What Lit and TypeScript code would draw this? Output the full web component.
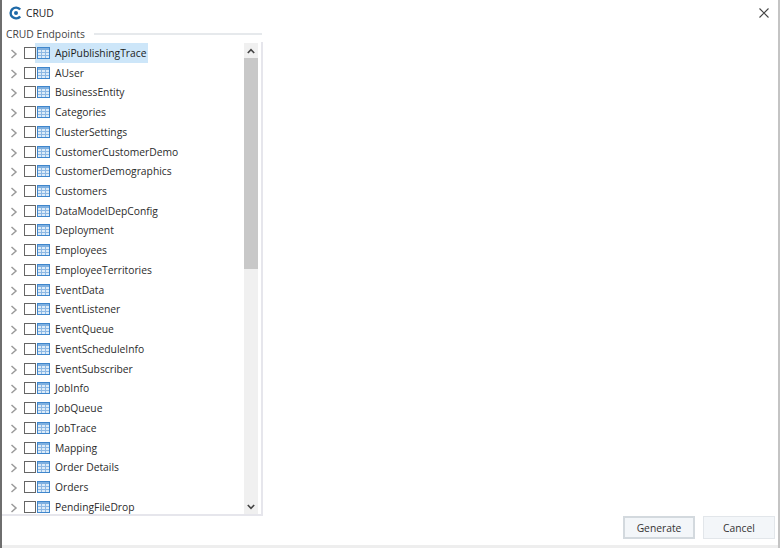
import { LitElement, html, css } from "lit";
import { customElement } from "lit/decorators.js";

const NAMES = ["ApiPublishingTrace","AUser","BusinessEntity","Categories","ClusterSettings","CustomerCustomerDemo","CustomerDemographics","Customers","DataModelDepConfig","Deployment","Employees","EmployeeTerritories","EventData","EventListener","EventQueue","EventScheduleInfo","EventSubscriber","JobInfo","JobQueue","JobTrace","Mapping","Order Details","Orders","PendingFileDrop"];

const chevron = html`<svg class="chev" width="8" height="10" viewBox="0 0 8 10"><path d="M1.5 1 L6 5 L1.5 9" fill="none" stroke="#9a9a9a" stroke-width="1.5"/></svg>`;
const tableIcon = html`<svg class="tbl" width="13" height="12" viewBox="0 0 13 12">
  <rect x="0.5" y="0.5" width="12" height="11" fill="#dcebf8" stroke="#3f86cc"/>
  <rect x="1" y="1" width="11" height="2" fill="#7fb0e0"/>
  <path d="M4.5 3V11M8.5 3V11M1 5.5H12M1 8.5H12" stroke="#8db8e4" stroke-width="1" fill="none"/>
</svg>`;

@customElement("app-root")
export class AppRoot extends LitElement {
  static styles = css`
    :host { display: block; width: 780px; height: 548px; overflow: hidden; }
    * { box-sizing: border-box; }
    .win {
      width: 780px; height: 548px; background: #fff; display: flex; flex-direction: column;
      border-left: 2px solid #6e6e6e; border-right: 2px solid #c4c4c4;
      font-family: "Open Sans", "Noto Sans", sans-serif; font-size: 10.3px; color: #2b2b2b;
    }
    .title { height: 25px; display: flex; align-items: center; padding-left: 7px; gap: 4px; flex: none; }
    .title span { color: #222; }
    .close { margin-left: auto; margin-right: 9px; }
    .legend { display: flex; align-items: center; height: 17px; padding-left: 4px; width: 260px; gap: 9px; flex: none; color: #444; }
    .legend i { flex: 1; height: 2px; background: #e6e9ec; }
    .box {
      width: 261px; height: 474px; flex: none; border-right: 2px solid #e6e6ec; border-bottom: 2px solid #e6e6ec;
      display: flex; overflow: hidden; padding-top: 1px;
    }
    .list { flex: 1; min-width: 0; overflow: hidden; padding-left: 8px; }
    .row { height: 19.74px; display: flex; align-items: center; }
    .chev { margin-top: 2px; margin-right: 6px; flex: none; }
    .cb { width: 12px; height: 12px; border: 1px solid #666; background: #fff; flex: none; margin-right: -1px; position: relative; }
    .item { display: flex; align-items: center; height: 20px; padding: 0 2px 0 2px; white-space: nowrap; }
    .label { margin-left: 5px; }
    .sel { background: #cde6f9; color: #1c1c1c; }
    .sb { width: 14px; margin-right: 3px; background: #f0f0f0; display: flex; flex-direction: column; flex: none; }
    .arrow { height: 15px; display: flex; align-items: center; justify-content: center; flex: none; }
    .thumb { height: 211px; background: #c8c8c8; flex: none; }
    .track { flex: 1; }
    .foot { flex: 1; display: flex; justify-content: flex-end; align-items: flex-end; gap: 8px; padding: 0 3px 6px 0; }
    .btn {
      width: 72px; height: 23px; display: flex; align-items: center; justify-content: center;
      background: #f3f6f9; border: 1px solid #e2e6ea; color: #333;
    }
    .btn.primary { border: 2px solid #d3d9de; }
    .strip { height: 3px; background: #eeeeee; flex: none; }
  `;

  render() {
    return html`<div class="win">
      <div class="title">
        <svg width="13" height="14" viewBox="0 0 13 14">
          <path d="M11.2 3.6A5.4 5.4 0 1 0 11.2 10.4" fill="none" stroke="#1f6aa8" stroke-width="2.4"/>
          <circle cx="7" cy="7" r="2" fill="#1f6aa8"/>
        </svg>
        <span>CRUD</span>
        <svg class="close" width="10" height="10" viewBox="0 0 10 10"><path d="M0.5 0.5L9.5 9.5M9.5 0.5L0.5 9.5" stroke="#444" stroke-width="1.1"/></svg>
      </div>
      <div class="legend"><span>CRUD Endpoints</span><i></i></div>
      <div class="box">
        <div class="list">
          ${NAMES.map((n, i) => html`<div class="row">
            ${chevron}<div class="cb"></div>
            <div class="item ${i === 0 ? "sel" : ""}">${tableIcon}<span class="label">${n}</span></div>
          </div>`)}
        </div>
        <div class="sb">
          <div class="arrow"><svg width="8" height="6" viewBox="0 0 8 6"><path d="M0.8 5L4 1.6L7.2 5" fill="none" stroke="#444" stroke-width="1.6"/></svg></div>
          <div class="thumb"></div>
          <div class="track"></div>
          <div class="arrow"><svg width="8" height="6" viewBox="0 0 8 6"><path d="M0.8 1L4 4.4L7.2 1" fill="none" stroke="#444" stroke-width="1.6"/></svg></div>
        </div>
      </div>
      <div class="foot">
        <div class="btn primary">Generate</div>
        <div class="btn">Cancel</div>
      </div>
      <div class="strip"></div>
    </div>`;
  }
}
